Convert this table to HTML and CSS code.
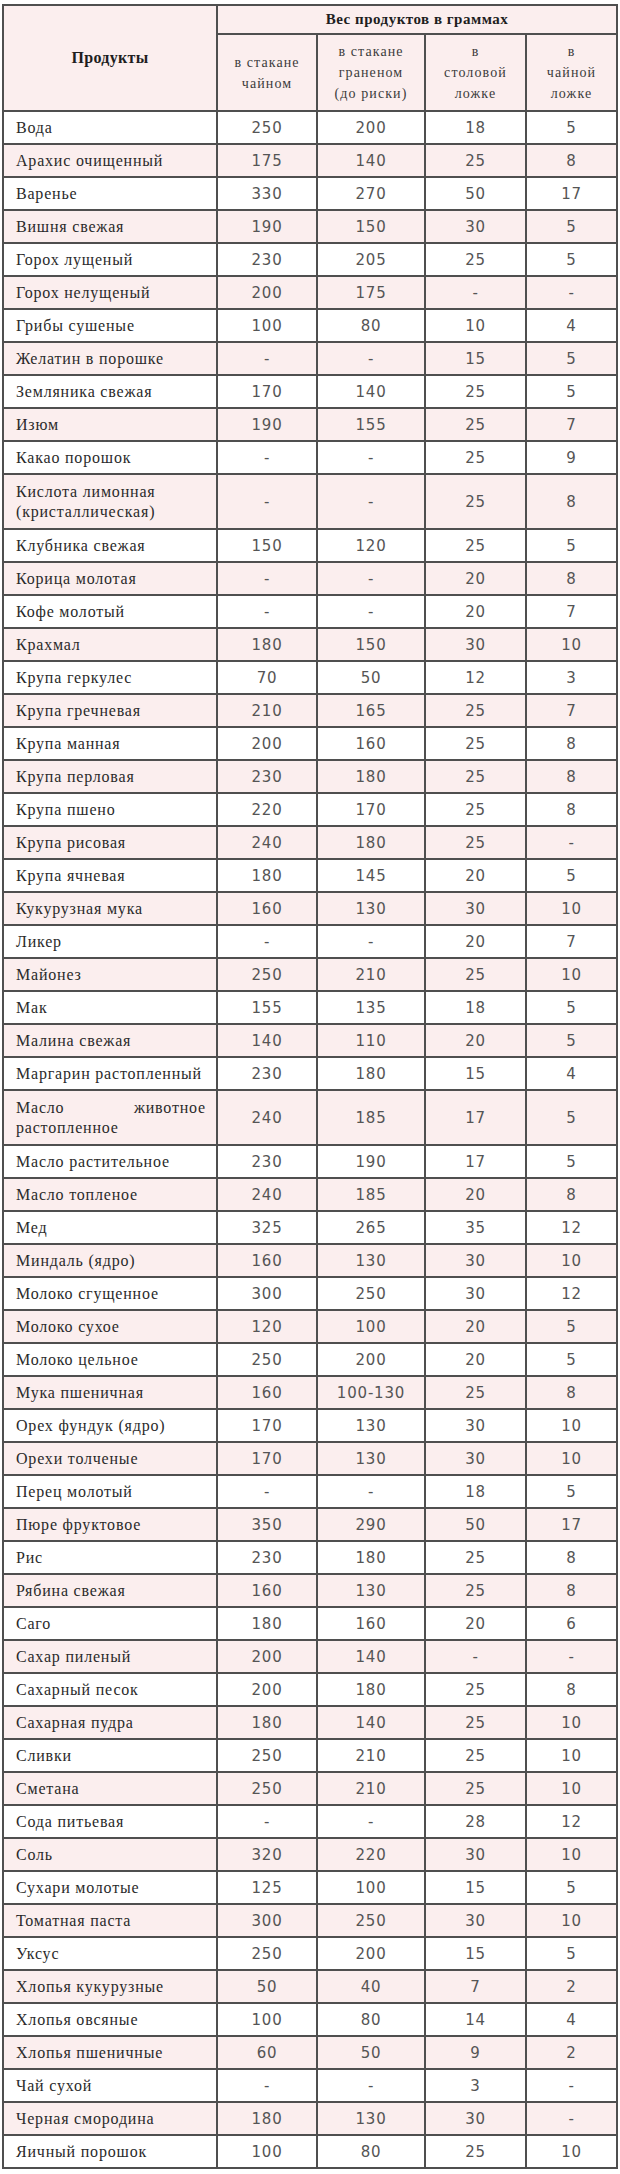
FILE: index.html
```html
<!DOCTYPE html>
<html lang="ru">
<head>
<meta charset="utf-8">
<title>Вес продуктов в граммах</title>
<link rel="stylesheet" href="styles.css">
</head>
<body>
<table class="weights">
  <colgroup>
    <col class="c-name">
    <col class="c-glass">
    <col class="c-facet">
    <col class="c-table">
    <col class="c-tea">
  </colgroup>
  <thead>
    <tr class="h1">
      <th rowspan="2" class="prod">Продукты</th>
      <th colspan="4" class="group">Вес продуктов в граммах</th>
    </tr>
    <tr class="h2">
      <th class="sub">в стакане<br>чайном</th>
      <th class="sub">в стакане<br>граненом<br>(до риски)</th>
      <th class="sub">в<br>столовой<br>ложке</th>
      <th class="sub">в<br>чайной<br>ложке</th>
    </tr>
  </thead>
  <tbody>
    <tr><td>Вода</td><td>250</td><td>200</td><td>18</td><td>5</td></tr>
    <tr><td>Арахис очищенный</td><td>175</td><td>140</td><td>25</td><td>8</td></tr>
    <tr><td>Варенье</td><td>330</td><td>270</td><td>50</td><td>17</td></tr>
    <tr><td>Вишня свежая</td><td>190</td><td>150</td><td>30</td><td>5</td></tr>
    <tr><td>Горох лущеный</td><td>230</td><td>205</td><td>25</td><td>5</td></tr>
    <tr><td>Горох нелущеный</td><td>200</td><td>175</td><td>-</td><td>-</td></tr>
    <tr><td>Грибы сушеные</td><td>100</td><td>80</td><td>10</td><td>4</td></tr>
    <tr><td>Желатин в порошке</td><td>-</td><td>-</td><td>15</td><td>5</td></tr>
    <tr><td>Земляника свежая</td><td>170</td><td>140</td><td>25</td><td>5</td></tr>
    <tr><td>Изюм</td><td>190</td><td>155</td><td>25</td><td>7</td></tr>
    <tr><td>Какао порошок</td><td>-</td><td>-</td><td>25</td><td>9</td></tr>
    <tr class="tall"><td>Кислота лимонная<br>(кристаллическая)</td><td>-</td><td>-</td><td>25</td><td>8</td></tr>
    <tr><td>Клубника свежая</td><td>150</td><td>120</td><td>25</td><td>5</td></tr>
    <tr><td>Корица молотая</td><td>-</td><td>-</td><td>20</td><td>8</td></tr>
    <tr><td>Кофе молотый</td><td>-</td><td>-</td><td>20</td><td>7</td></tr>
    <tr><td>Крахмал</td><td>180</td><td>150</td><td>30</td><td>10</td></tr>
    <tr><td>Крупа геркулес</td><td>70</td><td>50</td><td>12</td><td>3</td></tr>
    <tr><td>Крупа гречневая</td><td>210</td><td>165</td><td>25</td><td>7</td></tr>
    <tr><td>Крупа манная</td><td>200</td><td>160</td><td>25</td><td>8</td></tr>
    <tr><td>Крупа перловая</td><td>230</td><td>180</td><td>25</td><td>8</td></tr>
    <tr><td>Крупа пшено</td><td>220</td><td>170</td><td>25</td><td>8</td></tr>
    <tr><td>Крупа рисовая</td><td>240</td><td>180</td><td>25</td><td>-</td></tr>
    <tr><td>Крупа ячневая</td><td>180</td><td>145</td><td>20</td><td>5</td></tr>
    <tr><td>Кукурузная мука</td><td>160</td><td>130</td><td>30</td><td>10</td></tr>
    <tr><td>Ликер</td><td>-</td><td>-</td><td>20</td><td>7</td></tr>
    <tr><td>Майонез</td><td>250</td><td>210</td><td>25</td><td>10</td></tr>
    <tr><td>Мак</td><td>155</td><td>135</td><td>18</td><td>5</td></tr>
    <tr><td>Малина свежая</td><td>140</td><td>110</td><td>20</td><td>5</td></tr>
    <tr><td>Маргарин растопленный</td><td>230</td><td>180</td><td>15</td><td>4</td></tr>
    <tr class="tall"><td class="just">Масло животное растопленное</td><td>240</td><td>185</td><td>17</td><td>5</td></tr>
    <tr><td>Масло растительное</td><td>230</td><td>190</td><td>17</td><td>5</td></tr>
    <tr><td>Масло топленое</td><td>240</td><td>185</td><td>20</td><td>8</td></tr>
    <tr><td>Мед</td><td>325</td><td>265</td><td>35</td><td>12</td></tr>
    <tr><td>Миндаль (ядро)</td><td>160</td><td>130</td><td>30</td><td>10</td></tr>
    <tr><td>Молоко сгущенное</td><td>300</td><td>250</td><td>30</td><td>12</td></tr>
    <tr><td>Молоко сухое</td><td>120</td><td>100</td><td>20</td><td>5</td></tr>
    <tr><td>Молоко цельное</td><td>250</td><td>200</td><td>20</td><td>5</td></tr>
    <tr><td>Мука пшеничная</td><td>160</td><td>100-130</td><td>25</td><td>8</td></tr>
    <tr><td>Орех фундук (ядро)</td><td>170</td><td>130</td><td>30</td><td>10</td></tr>
    <tr><td>Орехи толченые</td><td>170</td><td>130</td><td>30</td><td>10</td></tr>
    <tr><td>Перец молотый</td><td>-</td><td>-</td><td>18</td><td>5</td></tr>
    <tr><td>Пюре фруктовое</td><td>350</td><td>290</td><td>50</td><td>17</td></tr>
    <tr><td>Рис</td><td>230</td><td>180</td><td>25</td><td>8</td></tr>
    <tr><td>Рябина свежая</td><td>160</td><td>130</td><td>25</td><td>8</td></tr>
    <tr><td>Саго</td><td>180</td><td>160</td><td>20</td><td>6</td></tr>
    <tr><td>Сахар пиленый</td><td>200</td><td>140</td><td>-</td><td>-</td></tr>
    <tr><td>Сахарный песок</td><td>200</td><td>180</td><td>25</td><td>8</td></tr>
    <tr><td>Сахарная пудра</td><td>180</td><td>140</td><td>25</td><td>10</td></tr>
    <tr><td>Сливки</td><td>250</td><td>210</td><td>25</td><td>10</td></tr>
    <tr><td>Сметана</td><td>250</td><td>210</td><td>25</td><td>10</td></tr>
    <tr><td>Сода питьевая</td><td>-</td><td>-</td><td>28</td><td>12</td></tr>
    <tr><td>Соль</td><td>320</td><td>220</td><td>30</td><td>10</td></tr>
    <tr><td>Сухари молотые</td><td>125</td><td>100</td><td>15</td><td>5</td></tr>
    <tr><td>Томатная паста</td><td>300</td><td>250</td><td>30</td><td>10</td></tr>
    <tr><td>Уксус</td><td>250</td><td>200</td><td>15</td><td>5</td></tr>
    <tr><td>Хлопья кукурузные</td><td>50</td><td>40</td><td>7</td><td>2</td></tr>
    <tr><td>Хлопья овсяные</td><td>100</td><td>80</td><td>14</td><td>4</td></tr>
    <tr><td>Хлопья пшеничные</td><td>60</td><td>50</td><td>9</td><td>2</td></tr>
    <tr><td>Чай сухой</td><td>-</td><td>-</td><td>3</td><td>-</td></tr>
    <tr><td>Черная смородина</td><td>180</td><td>130</td><td>30</td><td>-</td></tr>
    <tr><td>Яичный порошок</td><td>100</td><td>80</td><td>25</td><td>10</td></tr>
  </tbody>
</table>
</body>
</html>
```

FILE: styles.css
```css
html, body {
  margin: 0;
  padding: 0;
  background: #ffffff;
}

.weights {
  border-collapse: collapse;
  table-layout: fixed;
  width: 614px;
  margin: 4px 0 0 2px;
  font-family: "Liberation Serif", "Times New Roman", serif;
  color: #2a2a2a;
}

.c-name { width: 214px; }
.c-glass { width: 100px; }
.c-facet { width: 108px; }
.c-table { width: 101px; }
.c-tea { width: 91px; }

.weights th,
.weights td {
  border: 2px solid #4f4f4f;
  padding: 0;
  vertical-align: middle;
}

.weights thead th {
  background: #fbeeee;
}

.h1 { height: 29px; }
.h2 { height: 77px; }

.prod {
  font-size: 16px;
  font-weight: bold;
  letter-spacing: 0.3px;
  padding-top: 20px;
  color: #1e1e1e;
}

.group {
  font-size: 15px;
  font-weight: bold;
  letter-spacing: 0.5px;
  color: #1e1e1e;
}

.sub {
  font-size: 14px;
  font-weight: normal;
  line-height: 21px;
  letter-spacing: 1.1px;
  color: #3c3c3c;
  padding-top: 2px;
}

.weights tbody tr {
  height: 33px;
}

.weights tbody tr.tall {
  height: 55px;
}

.weights tbody tr:nth-child(even) td {
  background: #fbeeee;
}

.weights tbody td {
  font-family: "DejaVu Sans", Verdana, sans-serif;
  font-size: 15px;
  letter-spacing: 0.8px;
  color: #555555;
  text-align: center;
}

.weights tbody td:first-child {
  font-family: "Liberation Serif", "Times New Roman", serif;
  font-size: 16px;
  letter-spacing: 0.8px;
  line-height: 20px;
  color: #2a2a2a;
  text-align: left;
  padding: 0 10px 0 12px;
}

.weights tbody td.just {
  text-align: justify;
}
```
